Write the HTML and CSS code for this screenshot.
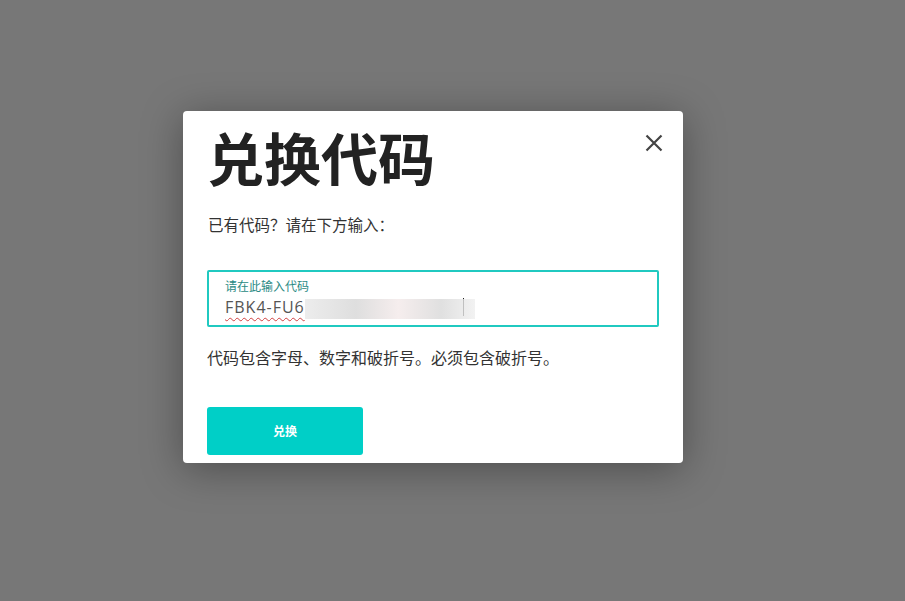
FILE: index.html
```html
<!DOCTYPE html>
<html lang="zh-CN">
<head>
    <meta charset="UTF-8">
    <meta name="viewport" content="width=device-width, initial-scale=1.0">
    <title>兑换代码</title>
    <link rel="stylesheet" href="styles.css">
</head>
<body>

    <!-- Overlay -->
    <div class="overlay">

        <!-- Redeem Dialog -->
        <div class="modal">
            <button class="close" aria-label="关闭">
                <svg width="18" height="18" viewBox="0 0 18 18">
                    <path d="M1.5 1.5 L16.5 16.5 M16.5 1.5 L1.5 16.5" stroke="#444" stroke-width="2.2" fill="none"/>
                </svg>
            </button>

            <h1>兑换代码</h1>
            <p class="intro">已有代码？请在下方输入：</p>

            <!-- Code Field -->
            <div class="field">
                <label for="code">请在此输入代码</label>
                <div class="value">
                    <span class="typed">FBK4-FU6</span><span class="blur"></span><span class="caret"></span>
                </div>
            </div>

            <p class="hint">代码包含字母、数字和破折号。必须包含破折号。</p>

            <button class="redeem">兑换</button>
        </div>
    </div>

</body>
</html>
```

FILE: styles.css
```css
body {
    margin: 0;
    padding: 0;
    background-color: #777777;
    font-family: "Noto Sans CJK SC", "Noto Sans", sans-serif;
    color: #333;
}

.overlay {
    height: 601px;
    padding: 111px 0 0 183px;
    box-sizing: border-box;
}

.modal {
    position: relative;
    width: 500px;
    box-sizing: border-box;
    padding: 13px 24px 8px 24px;
    background-color: white;
    border-radius: 4px;
    box-shadow: 0 6px 40px rgba(0, 0, 0, 0.35);
}

.close {
    position: absolute;
    top: 21px;
    right: 18px;
    width: 22px;
    height: 22px;
    padding: 2px;
    border: none;
    background: none;
    cursor: pointer;
}

h1 {
    margin: 0;
    font-size: 57px;
    line-height: 64px;
    font-weight: 700;
    color: #222;
}

.intro {
    margin: 26px 0 0 1px;
    font-size: 15.5px;
    line-height: 20px;
}

.field {
    margin-top: 36px;
    height: 57px;
    box-sizing: border-box;
    border: 2px solid #20c9c0;
    border-radius: 2px;
    padding: 6px 16px 0 16px;
}

.field label {
    display: block;
    font-size: 12px;
    line-height: 16px;
    color: #2a8a84;
}

.value {
    display: flex;
    align-items: center;
    height: 24px;
    margin-top: 1px;
}

.typed {
    font-family: "Open Sans", "Liberation Sans", sans-serif;
    font-size: 16px;
    color: #555;
    letter-spacing: 1px;
    text-decoration: underline wavy #d04040;
    text-decoration-thickness: 1px;
    text-underline-offset: 4px;
}

.blur {
    display: inline-block;
    width: 170px;
    height: 20px;
    margin-top: 4px;
    background: linear-gradient(90deg, #e8e8e8, #d6d6d6 30%, #f3e9e9 55%, #d8d8d8 80%, #efefef);
    opacity: 0.8;
}

.caret {
    display: inline-block;
    width: 1px;
    height: 18px;
    margin-left: -12px;
    background-color: #222;
}

.hint {
    margin: 20px 0 0 0;
    font-size: 16px;
    line-height: 20px;
}

.redeem {
    display: block;
    margin-top: 40px;
    width: 156px;
    height: 48px;
    padding-bottom: 3px;
    border: none;
    border-radius: 3px;
    background-color: #00cfc7;
    color: white;
    font-family: "Noto Sans CJK SC", sans-serif;
    font-size: 12px;
    font-weight: 700;
    cursor: pointer;
}
```
